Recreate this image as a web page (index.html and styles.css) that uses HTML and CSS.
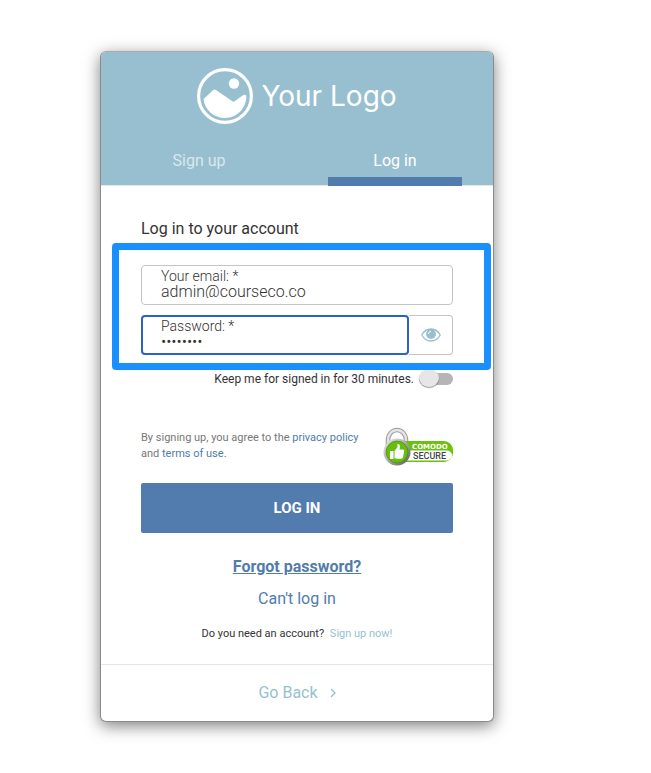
FILE: index.html
```html
<!DOCTYPE html>
<html lang="en">
<head>
  <meta charset="UTF-8">
  <meta name="viewport" content="width=device-width, initial-scale=1.0">
  <title>Log in</title>
  <link rel="stylesheet" href="styles.css">
</head>
<body>
  <main class="card">
    <header class="header">
      <div class="logo">
        <svg class="logo-mark" viewBox="0 0 56 56" aria-hidden="true">
          <circle cx="28" cy="28" r="26.4" fill="none" stroke="#fff" stroke-width="3.2"/>
          <circle cx="37" cy="15.5" r="5.2" fill="#fff"/>
          <path d="M6.5 31 16 22.2q1.700-1.300 3.300 0L36.500 34 46 27.300q3.200-1.600 3.400 1.500C49 40.500 40 50 28 50 17 50 7.500 42 6.500 31z" fill="#fff"/>
        </svg>
        <span class="logo-text">Your Logo</span>
      </div>
      <nav class="tabs">
        <a href="#signup" class="tab">Sign up</a>
        <a href="#login" class="tab active">Log in</a>
      </nav>
    </header>

    <form class="content">
      <h1 class="title">Log in to your account</h1>

      <div class="fields">
        <div class="field">
          <label for="email">Your email: *</label>
          <input id="email" type="email" value="admin@courseco.co">
        </div>
        <div class="password-row">
          <div class="field focused">
            <label for="password">Password: *</label>
            <input id="password" type="password" value="password">
          </div>
          <button type="button" class="show-password" aria-label="Show password">
            <svg width="20" height="14" viewBox="0 0 20 14" aria-hidden="true">
              <path d="M.8 7C5 -1 15 -1 19.200 7 15 15 5 15 .8 7z" fill="#fff" stroke="#97bfd0" stroke-width="1.300"/>
              <circle cx="10" cy="6" r="4.900" fill="#97bfd0"/>
              <path d="M7.300 6Q7.500 3.500 10 3.200" fill="none" stroke="#fff" stroke-width="1"/>
            </svg>
          </button>
        </div>
      </div>

      <div class="remember">
        <label for="remember">Keep me for signed in for 30 minutes.</label>
        <input id="remember" type="checkbox" class="switch">
      </div>

      <div class="legal">
        <p>By signing up, you agree to the <a href="#privacy">privacy policy</a> and <a href="#terms">terms of use</a>.</p>
        <svg class="badge" viewBox="0 0 70 40" role="img" aria-label="Comodo Secure">
          <defs>
            <linearGradient id="metal" x1="0" y1="0" x2="1" y2="1">
              <stop offset="0" stop-color="#eee"/>
              <stop offset=".5" stop-color="#aaa"/>
              <stop offset="1" stop-color="#555"/>
            </linearGradient>
          </defs>
          <path d="M5 19v-6a9 10 0 0 1 18 0v6" fill="none" stroke="#999" stroke-width="4.500"/>
          <path d="M5 19v-6a9 10 0 0 1 18 0v6" fill="none" stroke="#e4e4e4" stroke-width="2.500"/>
          <rect x="12" y="14" width="58" height="21" rx="9" fill="#6cc10e"/>
          <path d="M20 23.500h44a5 5 0 0 1 0 10H20z" fill="#fff"/>
          <circle cx="14" cy="25" r="13.500" fill="url(#metal)"/>
          <circle cx="14" cy="25" r="11" fill="#66bd0b" stroke="#3f8503" stroke-width=".6"/>
          <path d="M7 24h3.500v8H7zM11.500 24l3-4v-3q2.500-.5 2.500 2.500l-.5 3H20q1.500.3 1.200 1.800l-1.200 6q-.4 1.500-2 1.500h-4.500l-2-.8z" fill="#fff"/>
          <text x="29" y="22" class="badge-top">COMODO</text>
          <text x="30" y="32" class="badge-bottom">SECURE</text>
        </svg>
      </div>

      <button type="submit" class="submit">LOG IN</button>

      <a href="#forgot" class="forgot">Forgot password?</a>
      <a href="#help" class="help">Can't log in</a>
      <p class="signup">Do you need an account? <a href="#signup">Sign up now!</a></p>
    </form>

    <footer class="footer">
      <a href="#back">Go Back
        <svg width="6" height="10" viewBox="0 0 6 10" aria-hidden="true">
          <path d="M1 1l4 4-4 4" fill="none" stroke="currentColor" stroke-width="1.300"/>
        </svg>
      </a>
    </footer>
  </main>
</body>
</html>
```
FILE: styles.css
```css
* {
  box-sizing: border-box;
}
body {
  margin: 0;
  padding: 51px 24px 51px 100px;
  background: #fff;
  color: #333;
  font-family: Roboto, "Liberation Sans", sans-serif;
  font-size: 16px;
}
a {
  color: #517cad;
  text-decoration: none;
}
input,
button {
  font-family: inherit;
}
.card {
  max-width: 394px;
  border: 1px solid #888c8c;
  border-top-color: #aaa;
  border-radius: 6px;
  background: #fff;
  box-shadow: 0 4px 16px rgba(0, 0, 0, 0.5);
}
.header {
  padding-top: 16px;
  border-bottom: 1px solid #e4e8ea;
  border-radius: 5px 5px 0 0;
  background: #97bfd0;
}
.logo {
  display: flex;
  align-items: center;
  justify-content: center;
  gap: 8px;
  color: #fff;
}
.logo-mark {
  width: 56px;
  height: 56px;
}
.logo-text {
  font-family: Inter, sans-serif;
  font-size: 28px;
  font-weight: 400;
}
.tabs {
  display: flex;
  margin: 20px 0 -1px;
}
.tab {
  flex: 1;
  margin: 0 31px;
  padding-top: 7px;
  height: 42px;
  border-bottom: 9px solid transparent;
  color: rgba(255, 255, 255, 0.65);
  line-height: 20px;
  text-align: center;
}
.tab.active {
  border-bottom-color: #517cad;
  color: #fff;
}
.content {
  padding: 32px 40px 22px;
}
.title {
  margin: 0 0 25px;
  font-size: 16px;
  font-weight: 400;
  line-height: 22px;
}
.fields {
  position: relative;
  display: flex;
  flex-direction: column;
  gap: 10px;
}
/* callout frame around both fields */
.fields::after {
  content: "";
  position: absolute;
  inset: -22px -38px -15px -29px;
  border: 7px solid #1a90ff;
  border-radius: 4px;
  pointer-events: none;
}
.field {
  display: flex;
  flex-direction: column;
  height: 40px;
  padding: 2px 19px;
  border: 1px solid #c4c4c4;
  border-radius: 4px;
}
.field.focused {
  flex: 1;
  padding: 1px 18px;
  border: 2px solid #2c61c8;
}
.field label {
  flex: none;
  font-size: 14px;
  font-weight: 300;
  line-height: 16px;
}
.field input {
  width: 100%;
  height: 14px;
  padding: 0;
  border: 0;
  outline: 0;
  background: none;
  color: #333;
  font-size: 16px;
  font-weight: 300;
  line-height: 14px;
}
.password-row {
  display: flex;
}
.show-password {
  display: flex;
  align-items: center;
  justify-content: center;
  width: 44px;
  border: 1px solid #c4c4c4;
  border-left: 0;
  border-radius: 0 4px 4px 0;
  background: #fff;
}
.remember {
  display: flex;
  align-items: center;
  justify-content: flex-end;
  gap: 5px;
  height: 20px;
  margin-top: 14px;
  font-size: 12px;
}
.switch {
  appearance: none;
  width: 34px;
  height: 12px;
  margin: 0;
  border-radius: 6px;
  background: #b5b5b5;
}
.switch::before {
  content: "";
  display: block;
  width: 20px;
  height: 18px;
  margin-top: -4px;
  border-radius: 50%;
  background: #e6e6e6;
  box-shadow: 0 1px 1px rgba(0, 0, 0, 0.4);
}
.legal {
  display: flex;
  justify-content: space-between;
  height: 40px;
  margin-top: 38px;
  color: #777;
  font-size: 11px;
  line-height: 16px;
}
.legal p {
  max-width: 230px;
  margin: 3px 0 0;
}
.badge {
  flex: none;
  width: 70px;
  height: 40px;
}
.badge-top {
  fill: #fff;
  font-family: "DejaVu Sans", sans-serif;
  font-size: 7px;
  font-weight: 700;
}
.badge-bottom {
  fill: #444;
  font-size: 9px;
  font-weight: 500;
}
.submit {
  display: block;
  width: 100%;
  height: 50px;
  margin: 16px 0 22px;
  border: 0;
  border-radius: 2px;
  background: #517cad;
  color: #fff;
  font-size: 15px;
  font-weight: 700;
}
.forgot,
.help {
  display: block;
  line-height: 24px;
  text-align: center;
}
.forgot {
  margin-bottom: 8px;
  font-weight: 700;
  text-decoration: underline;
}
.signup {
  margin: 15px 0 0;
  font-size: 11px;
  line-height: 16px;
  text-align: center;
}
.signup a {
  margin-left: 3px;
  color: #97bfd0;
}
.footer {
  padding: 16px;
  border-top: 1px solid #e6e6e6;
  line-height: 24px;
  text-align: center;
}
.footer a {
  color: #97bfd0;
}
.footer svg {
  margin-left: 8px;
}
```
